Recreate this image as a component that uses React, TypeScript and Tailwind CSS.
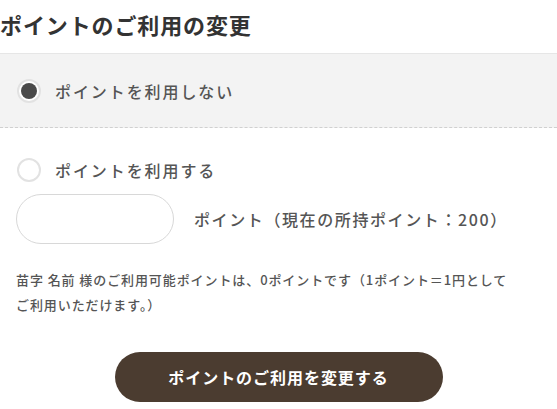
import React, { useState } from 'react';

const font = { fontFamily: '"Noto Sans CJK JP", "Noto Sans", sans-serif' };

const Radio = ({ checked, onClick }: { checked: boolean; onClick: () => void }) => (
  <button
    type="button"
    onClick={onClick}
    className="flex h-[24px] w-[24px] shrink-0 items-center justify-center rounded-full border-2 border-[#e2e2e2] bg-white"
  >
    {checked && <span className="h-[16px] w-[16px] rounded-full bg-[#4a4a4a]" />}
  </button>
);

export default function App() {
  const [usePoints, setUsePoints] = useState(false);
  const [amount, setAmount] = useState('');

  return (
    <div className="min-h-[409px] w-[557px] bg-white text-[#555]" style={font}>
      <h1 className="pt-[8px] text-[22px] font-bold leading-[32px] tracking-[0.04em] text-[#333]">
        ポイントのご利用の変更
      </h1>

      <div className="mt-[13px] flex h-[75px] items-center gap-[14px] border-t border-b border-t-[#e6e6e6] border-b-[#d0d0d0] bg-[#f3f3f3] pl-[17px] [border-bottom-style:dashed]">
        <Radio checked={!usePoints} onClick={() => setUsePoints(false)} />
        <span className="text-[16px] font-medium tracking-[0.12em]">ポイントを利用しない</span>
      </div>

      <div className="px-[16px]">
        <div className="mt-[30px] flex items-center gap-[14px] pl-[1px]">
          <Radio checked={usePoints} onClick={() => setUsePoints(true)} />
          <span className="text-[16px] font-medium tracking-[0.12em]">ポイントを利用する</span>
        </div>

        <div className="mt-[12px] flex items-center gap-[20px]">
          <input
            value={amount}
            onChange={(e) => setAmount(e.target.value)}
            className="h-[50px] w-[158px] rounded-full border border-[#d8d8d8] bg-white px-4 text-[15px] outline-none"
          />
          <span className="text-[16px] font-medium tracking-[0.1em]">ポイント（現在の所持ポイント：200）</span>
        </div>

        <p className="mt-[23px] text-[13px] font-medium leading-[25px] tracking-[0.07em]">
          苗字 名前 様のご利用可能ポイントは、0ポイントです（1ポイント＝1円として
          <br />
          ご利用いただけます。）
        </p>
      </div>

      <div className="mt-[35px] flex justify-center">
        <button
          type="button"
          className="h-[50px] w-[328px] rounded-full bg-[#4b3c30] text-[16px] font-bold tracking-[0.06em] text-white"
        >
          ポイントのご利用を変更する
        </button>
      </div>
    </div>
  );
}
